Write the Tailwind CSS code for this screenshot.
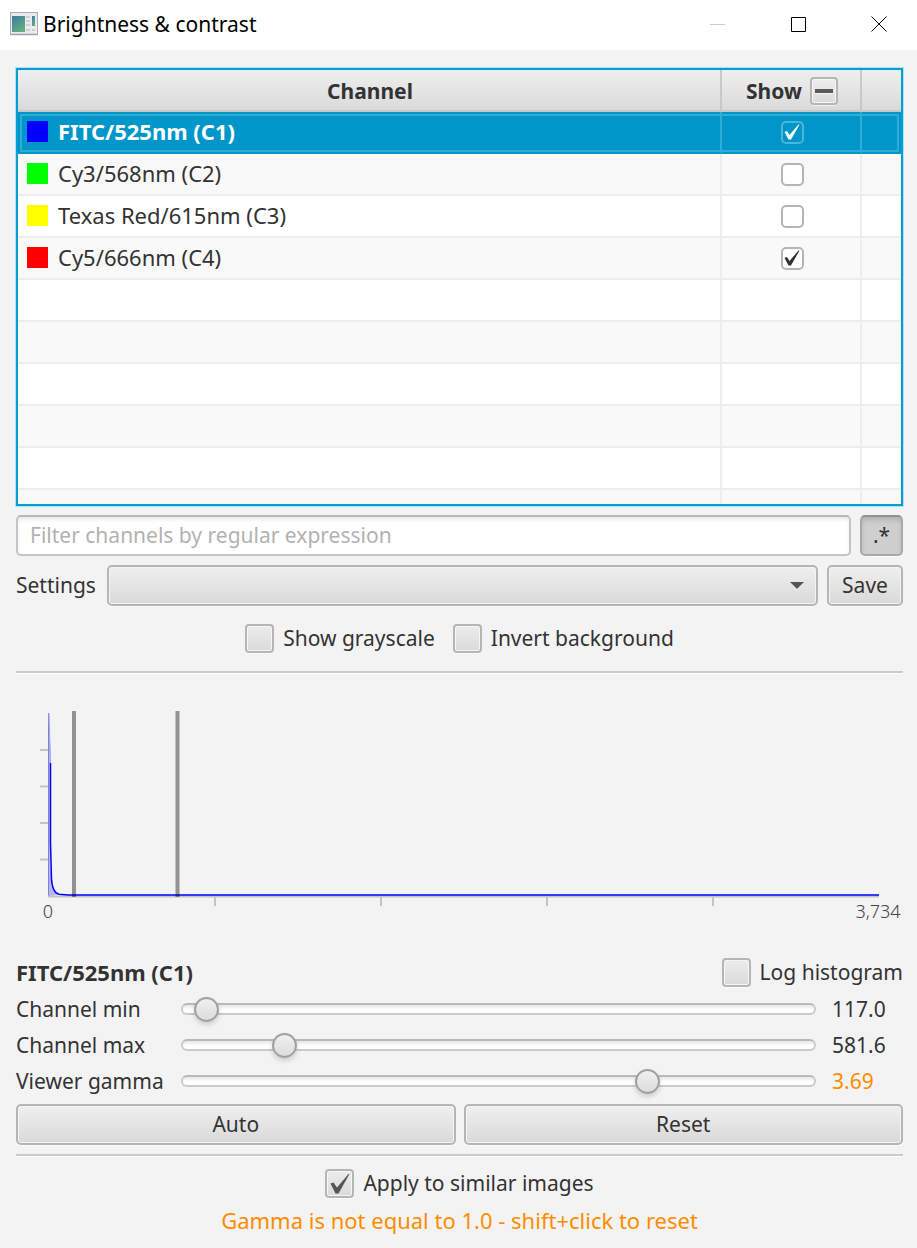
<!DOCTYPE html>
<html lang="en">
<head>
  <meta charset="UTF-8" />
  <meta name="viewport" content="width=device-width, initial-scale=1.0" />
  <title>Brightness & contrast</title>
  <script src="https://cdn.jsdelivr.net/npm/@tailwindcss/browser@4"></script>
</head>
<body class="min-h-screen bg-[#f3f3f3] text-[#333333] text-[21px] leading-7 font-['Noto_Sans','Noto_Sans_CJK_SC',sans-serif]">
  <!-- Title bar -->
  <header class="flex h-[50px] items-center bg-white pb-[2px] pl-[10px] text-black">
    <svg class="h-6 w-7 shrink-0" viewBox="0 0 28 24">
      <defs>
        <linearGradient id="appPane" x1="0" y1="0" x2="0.6" y2="1">
          <stop offset="0" stop-color="#4478a4" />
          <stop offset="1" stop-color="#5fae80" />
        </linearGradient>
      </defs>
      <rect x="0.5" y="0.5" width="27" height="22" fill="#e9ebee" stroke="#a9adb3" />
      <path d="M1 22.5h26" stroke="#9da1a8" stroke-width="1.5" />
      <rect x="2" y="4" width="13" height="16" fill="url(#appPane)" />
      <path d="M16 5h4M16 9h4M16 13h4M16 18h4M22 18h3" stroke="#c3c6ca" stroke-width="1.5" />
      <rect x="22" y="4" width="3" height="10" fill="url(#appPane)" />
    </svg>
    <h1 class="ml-[5px] flex-1">Brightness &amp; contrast</h1>
    <button class="grid h-full w-[81px] place-items-center" aria-label="Minimize">
      <svg class="size-4" viewBox="0 0 16 16" stroke="#cccccc"><path d="M0 8.5h15" /></svg>
    </button>
    <button class="grid h-full w-[81px] place-items-center" aria-label="Maximize">
      <svg class="size-4" viewBox="0 0 16 16" fill="none" stroke="#000000"><path d="M0.5 1.5h14v14h-14z" /></svg>
    </button>
    <button class="grid h-full w-[78px] place-items-center pl-[2px]" aria-label="Close">
      <svg class="size-4" viewBox="0 0 16 16" stroke="#000000"><path d="M0.5 0.5l15 15M15.5 0.5l-15 15" /></svg>
    </button>
  </header>

  <main class="flex flex-col pt-[18px] pr-[14px] pb-3 pl-4">
    <!-- Channel table -->
    <div class="h-[438px] overflow-hidden border-2 border-[#039ed3] bg-white shadow-[0_0_0_1px_#b4e0ed]">
      <table class="w-full table-fixed border-separate border-spacing-0">
        <colgroup>
          <col />
          <col class="w-[140px]" />
          <col class="w-[39px]" />
        </colgroup>
        <thead>
          <tr class="h-[42px] bg-linear-to-b from-[#efefef] to-[#d9d9d9]">
            <th class="border-r-2 border-b-2 border-[#c8c8c8] p-0 pt-[2px] pl-[2px] font-bold">Channel</th>
            <th class="border-r-2 border-b-2 border-[#c8c8c8] p-0 pt-[2px] pl-[2px] font-bold">
              <label class="flex items-center justify-center gap-2">Show
                <span class="grid place-items-center">
                  <input type="checkbox" class="col-start-1 row-start-1 size-7 appearance-none rounded-[4px] border-2 border-[#b5b5b5] bg-linear-to-b from-[#efefef] to-[#dadada] shadow-[inset_0_0_0_1px_#f6f6f6,0_1px_0_#f4f4f4]" />
                  <svg class="pointer-events-none col-start-1 row-start-1 h-2 w-[18px]" viewBox="0 0 18 8"><path d="M0 2h18v4H0z" fill="#5b5b5b" /><path d="M0 6h18v1H0z" fill="#f4f4f4" /></svg>
                </span>
              </label>
            </th>
            <th class="border-b-2 border-[#c8c8c8] p-0" aria-label="Empty"></th>
          </tr>
        </thead>
        <tbody id="channels"></tbody>
      </table>
    </div>

    <!-- Filter -->
    <div class="mt-[9px] flex gap-[9px]">
      <input type="text" aria-label="Filter channels" placeholder="Filter channels by regular expression" class="h-[41px] min-w-0 flex-1 rounded-[5px] border-2 border-[#c4c4c4] border-t-[#b8b8b8] bg-white px-3 pb-[2px] shadow-[inset_0_3px_4px_-1px_#e4e4e4] placeholder:text-[#b2b2b2]" />
      <button class="h-[41px] w-[43px] rounded-[5px] border-2 border-[#a9a9a9] border-t-[#929292] bg-[#cfcfcf] pb-[2px] shadow-[inset_0_4px_6px_-2px_#a8a8a8,0_1px_0_#fbfbfb]">.*</button>
    </div>

    <!-- Settings -->
    <div class="mt-[9px] flex items-center">
      <label for="settings" class="w-[91px] pb-[2px]">Settings</label>
      <div class="grid flex-1 items-center">
        <select id="settings" class="col-start-1 row-start-1 h-[41px] w-full appearance-none rounded-[5px] border-2 border-[#b5b5b5] bg-linear-to-b from-[#efefef] to-[#d9d9d9] px-3 shadow-[inset_0_0_0_1px_#f4f4f4,0_1px_0_#fbfbfb]">
          <option value=""></option>
        </select>
        <svg class="pointer-events-none col-start-1 row-start-1 mr-[14px] h-2 w-[14px] justify-self-end" viewBox="0 0 14 8"><path d="M1 1h12L7 8z" fill="#ffffff" /><path d="M0 0h14L7 7z" fill="#545454" /></svg>
      </div>
      <button class="ml-[9px] h-[41px] w-[76px] rounded-[5px] border-2 border-[#b5b5b5] bg-linear-to-b from-[#efefef] to-[#d9d9d9] pb-[2px] shadow-[inset_0_0_0_1px_#f4f4f4,0_1px_0_#fbfbfb]">Save</button>
    </div>

    <div class="mt-[18px] flex justify-center gap-[18px]">
      <label class="flex items-start gap-[9px]">
        <input type="checkbox" class="size-[29px] appearance-none rounded-[4px] border-2 border-[#b5b5b5] bg-linear-to-b from-[#ececec] to-[#dadada] shadow-[inset_0_0_0_1px_#f6f6f6,0_1px_0_#fbfbfb]" />
        Show grayscale
      </label>
      <label class="flex items-start gap-[9px]">
        <input type="checkbox" class="size-[29px] appearance-none rounded-[4px] border-2 border-[#b5b5b5] bg-linear-to-b from-[#ececec] to-[#dadada] shadow-[inset_0_0_0_1px_#f6f6f6,0_1px_0_#fbfbfb]" />
        Invert background
      </label>
    </div>

    <hr class="mt-[18px] border-t-2 border-[#cbcbcb] shadow-[0_1px_0_#ffffff]" />

    <!-- Histogram -->
    <svg class="h-auto w-full" viewBox="0 0 887 285" role="img" aria-label="Histogram">
      <path d="M24 77h9M24 113.500h9M24 150h9M24 186.500h9" stroke="#c4c4c4" stroke-width="2" />
      <path d="M199 224v9M365 224v9M531 224v9M697 224v9" stroke="#c4c4c4" stroke-width="2" />
      <path d="M32 223.500h831" stroke="#c4c4c4" stroke-width="2" />
      <path d="M32 40L34.500 75V190Q35 220 43 221.500L32 223z" fill="#0000ff" fill-opacity="0.25" />
      <path d="M32.500 40V222" stroke="#8080d8" stroke-width="1" />
      <path d="M33 40L34.500 90" stroke="#a0a0f4" stroke-width="1" />
      <path d="M34.500 90V170L35.500 206Q36.500 220 43 221.200L52 222H863" fill="none" stroke="#0000ff" stroke-width="1.500" />
      <path d="M58 38V224M161.500 38V224" stroke="#000000" stroke-opacity="0.4" stroke-width="4" />
      <g class="text-[18px] font-light" fill="#444444" text-anchor="middle">
        <text x="32" y="245">0</text>
        <text x="862" y="245">3,734</text>
      </g>
    </svg>

    <div class="flex items-start justify-between">
      <h2 class="text-[22px] leading-7 font-bold">FITC/525nm (C1)</h2>
      <label class="flex items-start gap-[9px]">
        <input type="checkbox" class="size-[29px] appearance-none rounded-[4px] border-2 border-[#b5b5b5] bg-linear-to-b from-[#ececec] to-[#dadada] shadow-[inset_0_0_0_1px_#f6f6f6,0_1px_0_#fbfbfb]" />
        Log histogram
      </label>
    </div>

    <!-- Sliders -->
    <div id="sliders" class="mt-1"></div>

    <div class="mt-[5px] grid grid-cols-2 gap-2">
      <button class="h-[41px] rounded-[5px] border-2 border-[#b5b5b5] bg-linear-to-b from-[#efefef] to-[#d9d9d9] pb-[2px] shadow-[inset_0_0_0_1px_#f4f4f4,0_1px_0_#fbfbfb]">Auto</button>
      <button class="h-[41px] rounded-[5px] border-2 border-[#b5b5b5] bg-linear-to-b from-[#efefef] to-[#d9d9d9] pb-[2px] shadow-[inset_0_0_0_1px_#f4f4f4,0_1px_0_#fbfbfb]">Reset</button>
    </div>

    <hr class="mt-[9px] border-t-2 border-[#cbcbcb] shadow-[0_1px_0_#ffffff]" />

    <label class="mt-[13px] flex items-start justify-center gap-[9px]">
      <span class="grid place-items-center">
        <input type="checkbox" checked class="peer col-start-1 row-start-1 size-[29px] appearance-none rounded-[4px] border-2 border-[#b5b5b5] bg-linear-to-b from-[#ececec] to-[#dadada] shadow-[inset_0_0_0_1px_#f6f6f6,0_1px_0_#fbfbfb]" />
        <svg class="pointer-events-none invisible col-start-1 row-start-1 size-5 peer-checked:visible" viewBox="0 0 20 20" fill="#555555"><path d="M0.500 9.500L3.500 8.500L7 13.500L18.500 0H19.500L8.500 19.500H5.500z" /></svg>
      </span>
      Apply to similar images
    </label>
    <p class="mt-2 text-center text-[22px] leading-7 text-[#ff8c00]">Gamma is not equal to 1.0 - shift+click to reset</p>
  </main>

  <script>
    const channels = [
      { name: "FITC/525nm (C1)", color: "#0000ff", show: true, selected: true },
      { name: "Cy3/568nm (C2)", color: "#00ff00", show: false },
      { name: "Texas Red/615nm (C3)", color: "#ffff00", show: false },
      { name: "Cy5/666nm (C4)", color: "#ff0000", show: true }
    ];

    const channelRow = c => {
      const line = c.selected ? 'border-[#0096c9] border-r-[#32abd4]' : 'border-[#ededed]';
      const row = c.selected ? 'bg-[#0096c9] font-bold text-white outline-2 outline-offset-[-4px] outline-[#32abd4]' : 'odd:bg-white even:bg-[#f9f9f9]';
      const box = c.selected ? 'border-[#4cb6da]' : 'border-[#b5b5b5] bg-white';
      return `
      <tr class="h-[42px] ${row}">
        <td class="border-r-2 border-b-2 p-0 pb-[2px] ${line}">
          <div class="flex items-center gap-[10px] pl-[9px] text-[22px] leading-7">
            <span class="size-[21px]" style="background:${c.color}"></span>${c.name}
          </div>
        </td>
        <td class="border-r-2 border-b-2 p-0 pl-[2px] ${line}">
          <div class="grid place-items-center">
            <input type="checkbox" aria-label="Show ${c.name}" ${c.show ? 'checked' : ''} class="peer col-start-1 row-start-1 size-[23px] appearance-none rounded-[5px] border-2 ${box}">
            <svg class="pointer-events-none invisible col-start-1 row-start-1 size-4 peer-checked:visible" viewBox="0 0 16 16" fill="currentColor"><path d="M0.500 8L3 7L5.500 11L14.500 0.500H15.500L7 15.500H4.500z" /></svg>
          </div>
        </td>
        <td class="border-b-2 p-0 ${c.selected ? 'border-[#0096c9]' : 'border-[#ededed]'}"></td>
      </tr>`;
    };

    // Unused rows keep the striping down to the bottom edge
    const emptyRow = `
      <tr class="h-[42px] odd:bg-white even:bg-[#f9f9f9]">
        <td class="border-r-2 border-b-2 border-[#ededed] p-0"></td>
        <td class="border-r-2 border-b-2 border-[#ededed] p-0"></td>
        <td class="border-b-2 border-[#ededed] p-0"></td>
      </tr>`;

    document.getElementById('channels').innerHTML = channels.map(channelRow).join('') + emptyRow.repeat(6);

    const sliders = [
      { id: "min", label: "Channel min", low: 40, high: 3685, value: 117, text: "117.0", style: "" },
      { id: "max", label: "Channel max", low: 40, high: 3685, value: 581.6, text: "581.6", style: "" },
      { id: "gamma", label: "Viewer gamma", low: 0, high: 4.96, value: 3.69, text: "3.69", style: "text-[#ff8c00]" }
    ];

    document.getElementById('sliders').innerHTML = sliders.map(s => `
      <div class="grid h-9 grid-cols-[165px_1fr_87px] items-center">
        <label for="${s.id}">${s.label}</label>
        <input type="range" id="${s.id}" min="${s.low}" max="${s.high}" step="any" value="${s.value}" class="h-3 w-full appearance-none rounded-full border-2 border-[#cbcbcb] border-t-[#b9b9b9] bg-linear-to-b from-[#e6e6e6] to-white to-60% [&::-webkit-slider-runnable-track]:-mx-[2px] [&::-webkit-slider-thumb]:size-[25px] [&::-webkit-slider-thumb]:appearance-none [&::-webkit-slider-thumb]:rounded-full [&::-webkit-slider-thumb]:border-2 [&::-webkit-slider-thumb]:border-[#a0a0a0] [&::-webkit-slider-thumb]:bg-linear-to-b [&::-webkit-slider-thumb]:from-[#f0f0f0] [&::-webkit-slider-thumb]:to-[#dcdcdc] [&::-webkit-slider-thumb]:shadow-[0_3px_5px_#00000026]">
        <output for="${s.id}" class="pl-4 ${s.style}">${s.text}</output>
      </div>`).join('');
  </script>
</body>
</html>
